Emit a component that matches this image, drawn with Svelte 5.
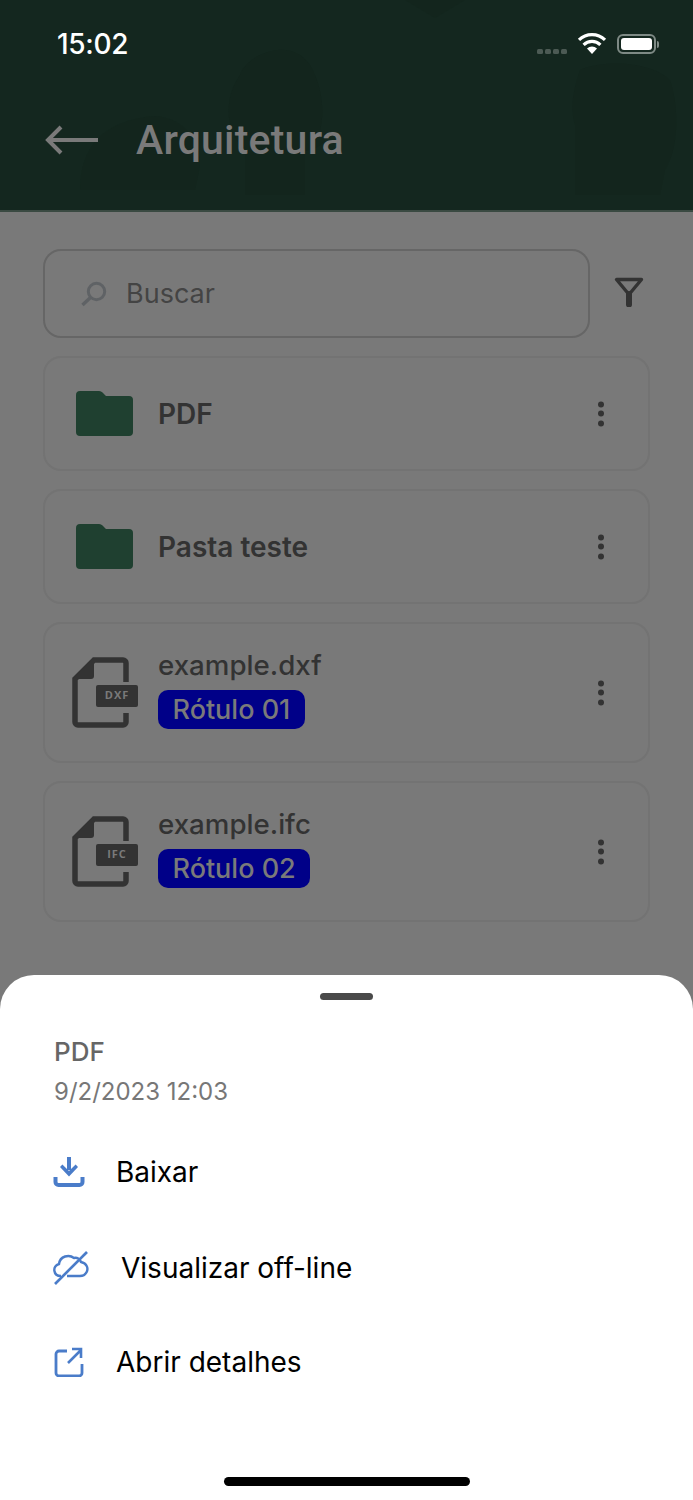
<script lang="ts">
  const folders = ['PDF', 'Pasta teste'];
  const files = [
    { name: 'example.dxf', ext: 'DXF', tag: 'Rótulo 01' },
    { name: 'example.ifc', ext: 'IFC', tag: 'Rótulo 02' }
  ];
</script>

<div class="page">
  <header class="top">
    <svg class="plants" viewBox="0 0 693 212" aria-hidden="true">
      <path d="M245 195V150c-22-20-20-55-5-75 6-20 50-40 70-10 14 24 14 50 10 66l5 10c-6 6-10 8-20 10v44z" />
      <path d="M80 190c0-40 20-70 75-74 30 2 45 25 45 50l-5 24z" opacity=".7" />
      <path d="M575 195v-70c-6-20 0-40 5-55 20-10 70-10 90 10 10 30 8 70-5 90l-5 25z" />
      <path d="M405 0h60l-30 18z" opacity=".7" />
    </svg>
    <div class="status">
      <span class="time">15:02</span>
      <div class="status-icons">
        <span class="signal"><i></i><i></i><i></i><i></i></span>
        <svg class="wifi" width="30" height="22" viewBox="0 0 30 22">
          <path d="M15 21l-5-5.6a7.4 7.4 0 0 1 10 0z" fill="#fff" />
          <path d="M6.6 11.8a12 12 0 0 1 16.8 0M2 6.9a18.6 18.6 0 0 1 26 0" fill="none" stroke="#fff" stroke-width="3.2" />
        </svg>
        <span class="battery"><b></b></span>
        <span class="nub"></span>
      </div>
    </div>
    <div class="title-row">
      <svg class="back" width="54" height="32" viewBox="0 0 54 32">
        <path d="M53 16H3M16 3L3 16l13 13" fill="none" stroke="#7a7a7a" stroke-width="4" />
      </svg>
      <h1>Arquitetura</h1>
    </div>
  </header>

  <main class="content">
    <div class="search-row">
      <div class="search">
        <svg width="28" height="26" viewBox="0 0 28 26">
          <circle cx="16.5" cy="10.5" r="8.2" fill="none" stroke="#5f6265" stroke-width="3" />
          <path d="M10.5 16.5L2.5 24" fill="none" stroke="#5f6265" stroke-width="3.4" />
        </svg>
        <span>Buscar</span>
      </div>
      <svg class="filter" width="30" height="30" viewBox="0 0 30 30">
        <path d="M2.500 2.500h25L15 17.500z" fill="none" stroke="#333" stroke-width="3.4" stroke-linejoin="round" />
        <path d="M15 17v10.500" stroke="#333" stroke-width="6" stroke-linecap="round" />
      </svg>
    </div>

    {#each folders as name}
      <div class="card folder-card">
        <svg class="folder" width="57" height="45" viewBox="0 0 57 45">
          <path d="M0 4a4 4 0 0 1 4-4h19c2 0 3 1 4 2l3 3h23a4 4 0 0 1 4 4v32a4 4 0 0 1-4 4H4a4 4 0 0 1-4-4z" fill="#1f4030" />
        </svg>
        <span class="folder-name">{name}</span>
        <span class="dots"><i></i><i></i><i></i></span>
      </div>
    {/each}

    {#each files as file}
      <div class="card file-card">
        <div class="file-icon">
          <svg width="66" height="71" viewBox="0 0 66 71">
            <path d="M54 25V6a3 3 0 0 0-3-3H22L3 22v43a3 3 0 0 0 3 3h45a3 3 0 0 0 3-3V56" fill="none" stroke="#333" stroke-width="5.5" />
            <path d="M22 1L1 22h18a3 3 0 0 0 3-3z" fill="#333" />
            <rect x="24" y="28" width="42" height="22" rx="2" fill="#333" />
          </svg>
          <span class="ext">{file.ext}</span>
        </div>
        <div class="file-text">
          <span class="file-name">{file.name}</span>
          <span class="tag">{file.tag}</span>
        </div>
        <span class="dots"><i></i><i></i><i></i></span>
      </div>
    {/each}
  </main>

  <section class="sheet">
    <div class="handle"></div>
    <div class="sheet-title">PDF</div>
    <div class="sheet-date">9/2/2023 12:03</div>

    <div class="action first">
      <svg class="icon" width="32" height="32" viewBox="0 0 32 32">
        <path d="M16 1v13" fill="none" stroke="#4a7cc9" stroke-width="4" />
        <path d="M7 11l2.400-2.400 6.600 6.400 6.600-6.400 2.400 2.400-9 9.500z" fill="#4a7cc9" />
        <path d="M2.500 21v5a3 3 0 0 0 3 3h21a3 3 0 0 0 3-3v-5" fill="none" stroke="#4a7cc9" stroke-width="4" />
      </svg>
      <span>Baixar</span>
    </div>
    <div class="action second">
      <svg class="icon" width="36" height="34" viewBox="0 0 36 34">
        <path d="M8 25c-8 0-9-10-2-12 1-8 10-10 15-6 3-1 6 1 7 4 6 1 8 7 5 11-1 2-3 3-6 3H14" fill="none" stroke="#4a7cc9" stroke-width="2.4" />
        <path d="M34 1L2 33" fill="none" stroke="#4a7cc9" stroke-width="2.6" />
      </svg>
      <span>Visualizar off-line</span>
    </div>
    <div class="action third">
      <svg class="icon" width="30" height="30" viewBox="0 0 30 30">
        <path d="M13 4H5a3 3 0 0 0-3 3v19a3 3 0 0 0 3 3h20a3 3 0 0 0 3-3v-9" fill="none" stroke="#4a7cc9" stroke-width="2.8" />
        <path d="M14 16L27 3M18 2h9v9" fill="none" stroke="#4a7cc9" stroke-width="2.6" />
      </svg>
      <span>Abrir detalhes</span>
    </div>
    <div class="home"></div>
  </section>
</div>

<style>
  :global(body) { margin: 0; background: #797979; }
  .page { width: 693px; height: 1500px; display: flex; flex-direction: column; overflow: hidden; font-family: Inter, "Liberation Sans", sans-serif; background: #797979; }

  .top { position: relative; height: 212px; box-sizing: border-box; background: #14271f; border-bottom: 2px solid #3a4a42; overflow: hidden; flex: none; }
  .plants { position: absolute; inset: 0; width: 693px; height: 212px; fill: #13251d; }
  .status { position: relative; display: flex; justify-content: space-between; align-items: center; height: 28px; padding: 30px 34px 0 57px; }
  .time { color: #fff; font-size: 28px; font-weight: 500; letter-spacing: -0.3px; }
  .status-icons { display: flex; align-items: center; }
  .signal { display: flex; gap: 2px; margin: 14px 10px 0 0; }
  .signal i { width: 6px; height: 5px; border-radius: 1.5px; background: #4c5a54; }
  .wifi { margin-right: 10px; }
  .battery { display: flex; box-sizing: border-box; width: 39px; height: 20px; padding: 2px; border: 2px solid #7e8a85; border-radius: 6px; }
  .battery b { flex: 1; background: #fff; border-radius: 3px; }
  .nub { width: 2px; height: 7px; margin-left: 1px; background: #7e8a85; border-radius: 0 2px 2px 0; }
  .title-row { position: relative; display: flex; align-items: center; gap: 37px; margin-top: 58px; padding-left: 45px; }
  .back { display: block; flex: none; }
  h1 { margin: 0; color: #7a7a7a; font: 500 41px/48px Roboto, sans-serif; letter-spacing: 0.2px; }

  .content { flex: 1; display: flex; flex-direction: column; gap: 18px; padding: 37px 43px 0; }
  .search-row { display: flex; align-items: center; }
  .search { display: flex; align-items: center; gap: 18px; box-sizing: border-box; width: 547px; height: 89px; padding-left: 35px; border: 2px solid #666; border-radius: 18px; color: #444; font-size: 27px; }
  .filter { margin: -3px 0 0 24px; }
  .card { display: flex; align-items: center; box-sizing: border-box; width: 607px; border: 2px solid #737373; border-radius: 18px; position: relative; }
  .folder-card { height: 115px; padding-left: 31px; }
  .folder { margin-right: 25px; }
  .folder-name { color: #333; font-size: 28px; font-weight: 600; }
  .file-card { height: 141px; padding-left: 27px; }
  .file-icon { position: relative; width: 66px; height: 71px; margin-right: 20px; }
  .file-icon svg { display: block; }
  .ext { position: absolute; left: 24px; top: 28px; width: 42px; color: #7a7a7a; font: 700 11px/20px "Open Sans", sans-serif; letter-spacing: 1px; text-align: center; }
  .file-text { display: flex; flex-direction: column; align-items: flex-start; gap: 8px; margin-top: -8px; }
  .file-name { color: #333; font-size: 27.7px; font-weight: 500; line-height: 34px; }
  .tag { padding: 0 14.500px; height: 39px; border-radius: 10px; background: #000088; color: #7a7a7a; font-size: 27px; font-weight: 500; line-height: 39px; }
  .dots { position: absolute; right: 44px; top: 50%; display: flex; flex-direction: column; gap: 3.5px; transform: translateY(-50%); }
  .dots i { width: 6px; height: 6px; border-radius: 50%; background: #333; }

  .sheet { flex: none; height: 525px; box-sizing: border-box; display: flex; flex-direction: column; padding: 18px 0 14px; background: #fff; border-radius: 34px 34px 0 0; }
  .handle { width: 53px; height: 7px; margin: 0 auto; border-radius: 4px; background: #4a4a4a; }
  .sheet-title { margin: 36px 0 0 54px; color: #666; font-size: 26px; line-height: 32px; font-weight: 500; }
  .sheet-date { margin: 9px 0 0 54px; color: #777; font-size: 24px; line-height: 30px; }
  .action { display: flex; align-items: center; margin-left: 53px; color: #000; font-size: 28px; height: 36px; }
  .action .icon { flex: none; }
  .first { margin-top: 47px; gap: 31px; }
  .second { margin-top: 60px; gap: 32px; }
  .third { margin-top: 58px; margin-left: 54px; gap: 32px; }
  .home { width: 246px; height: 9px; margin: auto auto 0; border-radius: 5px; background: #000; }
</style>
